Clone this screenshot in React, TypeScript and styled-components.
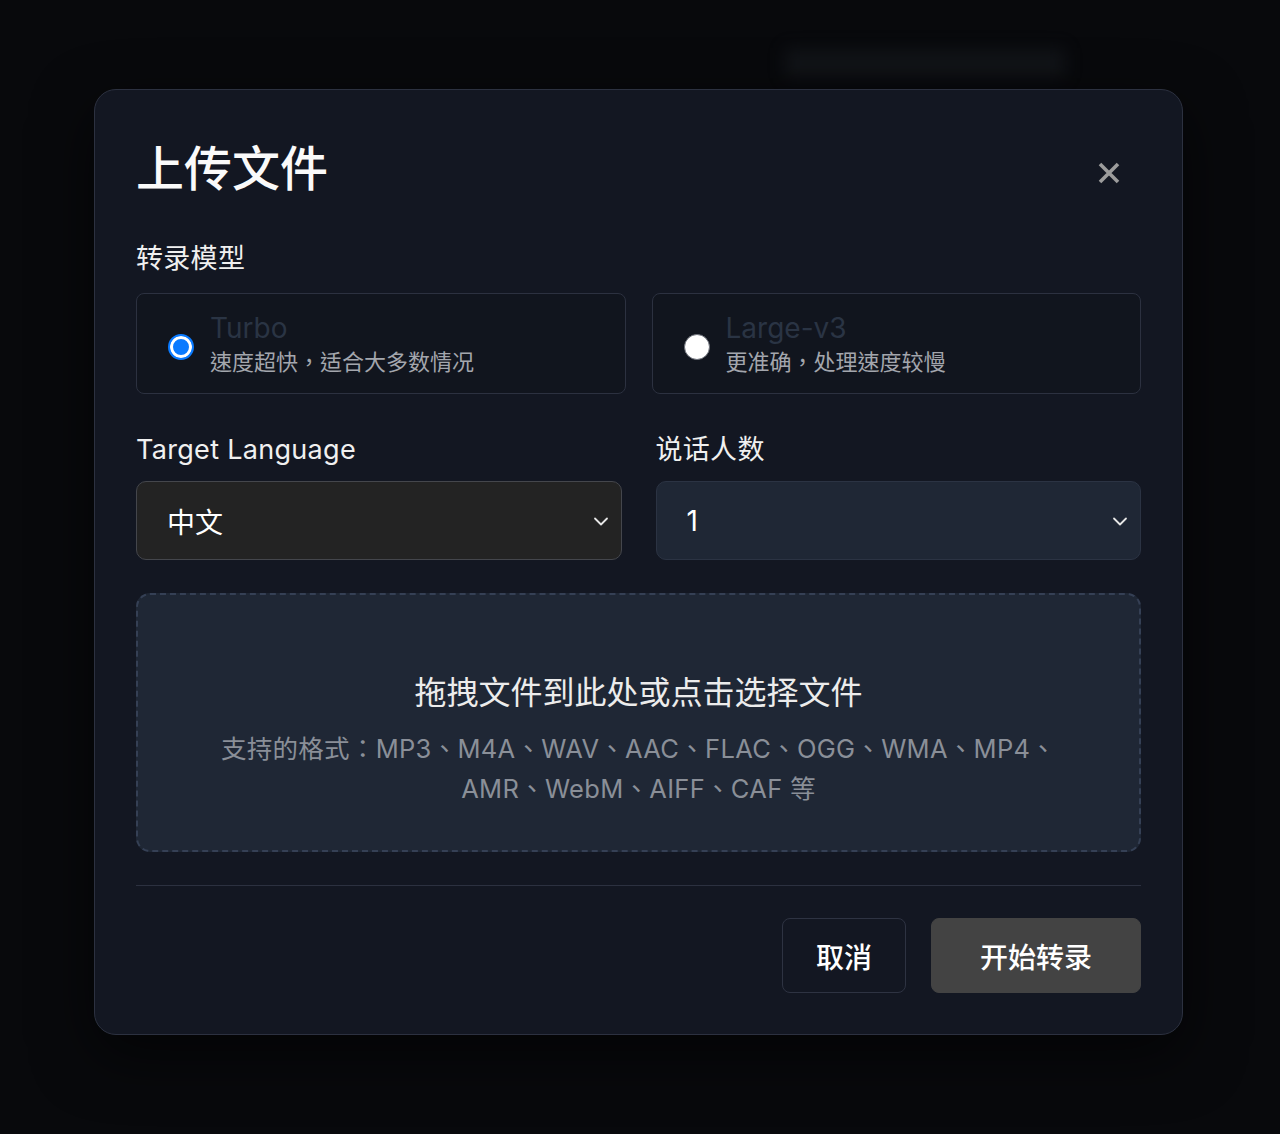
import React from "react";
import styled, { createGlobalStyle } from "styled-components";

const GlobalStyle = createGlobalStyle`
  * { box-sizing: border-box; }
  body {
    margin: 0;
    background: #08090c;
    font-family: Inter, "Noto Sans CJK SC", sans-serif;
    color: #f2f2f2;
  }
`;

const Page = styled.div`
  position: relative;
  width: 1280px;
  height: 1134px;
  overflow: hidden;
  display: flex;
  justify-content: flex-start;
  align-items: flex-start;
  padding: 89px 0 0 94px;
`;

// faint blurred page content behind the overlay
const Ghost = styled.div`
  position: absolute;
  left: 785px;
  top: 48px;
  width: 280px;
  height: 30px;
  background: #15181c;
  filter: blur(8px);
  opacity: 0.7;
`;

const Modal = styled.div`
  position: relative;
  width: 1089px;
  background: #131722;
  border: 1.5px solid #2c3140;
  border-radius: 22px;
  padding: 50px 41px 41px;
  box-shadow: 0 20px 60px rgba(0, 0, 0, 0.6);
`;

const Header = styled.div`
  display: flex;
  justify-content: space-between;
  align-items: center;
`;

const Title = styled.h1`
  margin: 0;
  font-size: 48px;
  line-height: 58px;
  font-weight: 500;
  color: #fafafa;
`;

const CloseButton = styled.button`
  background: none;
  border: none;
  padding: 0;
  margin: 8px 19px 0 0;
  width: 26px;
  height: 26px;
  display: flex;
  align-items: center;
  justify-content: center;
  cursor: pointer;
`;

const Label = styled.div<{ $top?: number }>`
  font-size: 27px;
  line-height: 42px;
  letter-spacing: 0.3px;
  color: #f0f0f0;
  margin-top: ${(p) => p.$top ?? 0}px;
`;

const ModelGrid = styled.div`
  display: grid;
  grid-template-columns: 1fr 1fr;
  gap: 26px;
  margin-top: 13px;
`;

const ModelCard = styled.label`
  display: flex;
  align-items: center;
  height: 101px;
  padding: 0 30px 0 31px;
  border: 1.5px solid #2c3140;
  border-radius: 8px;
  background: #11151e;
  gap: 16px;
  cursor: pointer;
`;

const Radio = styled.span<{ $checked?: boolean }>`
  flex: none;
  width: 26px;
  height: 26px;
  border-radius: 50%;
  margin-top: 6px;
  background: ${(p) => (p.$checked ? "#0a7aff" : "#ffffff")};
  border: ${(p) => (p.$checked ? "2.5px solid #0a7aff" : "1.5px solid #6b6f78")};
  box-shadow: ${(p) => (p.$checked ? "inset 0 0 0 3px #ffffff" : "none")};
`;

const ModelText = styled.div`
  display: flex;
  flex-direction: column;
`;

const ModelName = styled.span`
  font-size: 28px;
  line-height: 36px;
  color: #2a3444;
`;

const ModelDesc = styled.span`
  font-family: Inter, "Noto Sans CJK TC", sans-serif;
  font-size: 22px;
  line-height: 32px;
  color: #a3a6ad;
`;

const FieldGrid = styled.div`
  display: grid;
  grid-template-columns: 1fr 1fr;
  gap: 34px;
  margin-top: 35px;
`;

const Field = styled.div`
  display: flex;
  flex-direction: column;
`;

const Select = styled.div<{ $variant: "neutral" | "slate" }>`
  margin-top: 10px;
  height: 79px;
  display: flex;
  align-items: center;
  justify-content: space-between;
  padding: 0 10px 0 30px;
  border-radius: 10px;
  font-size: 28px;
  color: #ffffff;
  background: ${(p) => (p.$variant === "neutral" ? "#232323" : "#1f2735")};
  border: 1.5px solid ${(p) => (p.$variant === "neutral" ? "#44464c" : "#2b3343")};
`;

const DropZone = styled.div`
  margin-top: 33px;
  padding: 74px 30px 41px;
  border: 2px dashed #354055;
  border-radius: 14px;
  background: #1f2735;
  text-align: center;
  cursor: pointer;
`;

const DropTitle = styled.div`
  font-size: 32px;
  line-height: 48px;
  color: #ececec;
`;

const DropHint = styled.div`
  margin-top: 12px;
  font-family: Inter, "Noto Sans CJK TC", sans-serif;
  font-size: 25.5px;
  line-height: 40px;
  letter-spacing: 0.3px;
  color: #8a8f98;
`;

const Divider = styled.hr`
  margin: 33px 0 0;
  border: none;
  border-top: 1.5px solid #2c3140;
`;

const Footer = styled.div`
  display: flex;
  justify-content: flex-end;
  gap: 25px;
  margin-top: 32px;
`;

const Button = styled.button<{ $primary?: boolean }>`
  height: 75px;
  padding: 0 ${(p) => (p.$primary ? 48 : 33)}px;
  border-radius: 8px;
  font-family: inherit;
  font-size: 28px;
  font-weight: 500;
  color: #ffffff;
  background: ${(p) => (p.$primary ? "#434343" : "transparent")};
  border: 1.5px solid ${(p) => (p.$primary ? "#434343" : "#2e3342")};
  cursor: pointer;
`;

const Chevron = () => (
  <svg width="20" height="20" viewBox="0 0 20 20" fill="none">
    <path d="M4 7.5l6 6 6-6" stroke="#e6e6e6" strokeWidth="1.8" strokeLinecap="round" strokeLinejoin="round" />
  </svg>
);

const models = [
  { id: "turbo", name: "Turbo", desc: "速度超快，适合大多数情况" },
  { id: "large", name: "Large-v3", desc: "更准确，处理速度较慢" },
];

export default function App() {
  const [model, setModel] = React.useState("turbo");

  return (
    <Page>
      <GlobalStyle />
      <Ghost />
      <Modal>
        <Header>
          <Title>上传文件</Title>
          <CloseButton aria-label="close">
            <svg width="24" height="24" viewBox="0 0 24 24">
              <path d="M3 3l18 18M21 3L3 21" stroke="#9c9c9c" strokeWidth="3.6" strokeLinecap="butt" />
            </svg>
          </CloseButton>
        </Header>

        <Label $top={40}>转录模型</Label>
        <ModelGrid>
          {models.map((m) => (
            <ModelCard key={m.id} onClick={() => setModel(m.id)}>
              <Radio $checked={model === m.id} />
              <ModelText>
                <ModelName>{m.name}</ModelName>
                <ModelDesc>{m.desc}</ModelDesc>
              </ModelText>
            </ModelCard>
          ))}
        </ModelGrid>

        <FieldGrid>
          <Field>
            <Label>Target Language</Label>
            <Select $variant="neutral">
              <span>中文</span>
              <Chevron />
            </Select>
          </Field>
          <Field>
            <Label>说话人数</Label>
            <Select $variant="slate">
              <span>1</span>
              <Chevron />
            </Select>
          </Field>
        </FieldGrid>

        <DropZone>
          <DropTitle>拖拽文件到此处或点击选择文件</DropTitle>
          <DropHint>
            支持的格式：MP3、M4A、WAV、AAC、FLAC、OGG、WMA、MP4、
            <br />
            AMR、WebM、AIFF、CAF 等
          </DropHint>
        </DropZone>

        <Divider />

        <Footer>
          <Button>取消</Button>
          <Button $primary>开始转录</Button>
        </Footer>
      </Modal>
    </Page>
  );
}
